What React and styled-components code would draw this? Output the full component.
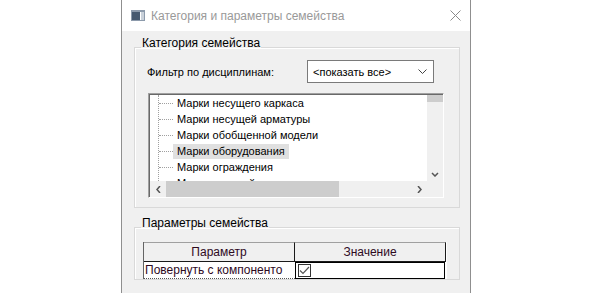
import React from "react";
import styled, { createGlobalStyle } from "styled-components";

const Global = createGlobalStyle`
  html, body {
    margin: 0;
    overflow: hidden;
    background: #fff;
  }
  body {
    font-family: "Liberation Sans", Arial, sans-serif;
  }
`;

const Dialog = styled.div`
  margin-left: 121px;
  width: 350px;
  height: 293px;
  box-sizing: border-box;
  border-left: 1px solid #8f8f8f;
  border-right: 1px solid #8f8f8f;
  background: #f0f0f0;
  display: flex;
  flex-direction: column;
  overflow: hidden;
`;

const TitleBar = styled.div`
  height: 31px;
  flex: none;
  background: #fff;
  display: flex;
  align-items: center;
  gap: 6px;
  padding: 0 9px 0 9px;
  font-size: 12px;
  color: #999;
`;

const Close = styled.svg`
  margin-left: auto;
`;

const Body = styled.div`
  padding: 6px 10px 0 12px;
`;

const Group = styled.fieldset`
  margin: 0;
  padding: ${(p) => p.$pad};
  min-width: 0;
  border: 1px solid #d9d9d9;
  box-shadow: inset 1px 1px 0 #fff;
  & + & {
    margin-top: 9px;
  }
`;

const Legend = styled.legend`
  margin-left: ${(p) => p.$offset}px;
  padding: 0 1px 8px;
  font-size: 12px;
  line-height: 12px;
  color: #000;
`;

const FilterRow = styled.div`
  margin-top: 3px;
  height: 23px;
  display: flex;
  align-items: center;
  font-size: 11px;
  color: #000;
`;

const FilterLabel = styled.span`
  width: 160px;
`;

const Select = styled.div`
  width: 127px;
  height: 23px;
  box-sizing: border-box;
  border: 1px solid #7a7a7a;
  background: #fff;
  display: flex;
  align-items: center;
  padding: 0 6px 0 5px;
  font-size: 11px;
  justify-content: space-between;
`;

const ListBox = styled.div`
  margin: 10px 0 0 1px;
  width: 296px;
  height: 105px;
  box-sizing: border-box;
  border: 1px solid;
  border-color: #a0a0a0 #fff #fff #a0a0a0;
  box-shadow: inset 1px 1px 0 #696969;
  background: #fff;
  padding: 1px 0 0 1px;
  display: grid;
  grid-template-columns: 1fr 16px;
  grid-template-rows: 1fr 16px;
`;

const Tree = styled.div`
  margin-left: 8px;
  border-left: 1px dotted #a0a0a0;
  overflow: hidden;
  font-size: 11px;
`;

const TreeRow = styled.div`
  height: 16px;
  display: flex;
  align-items: center;
`;

const Branch = styled.span`
  width: 14px;
  border-top: 1px dotted #a0a0a0;
`;

const TreeLabel = styled.span`
  padding: 1px 4px 2px 4px;
  background: ${(p) => (p.$selected ? "#e0e0e0" : "transparent")};
  white-space: nowrap;
`;

const VScroll = styled.div`
  background: #f0f0f0;
  display: flex;
  flex-direction: column;
  align-items: center;
  justify-content: space-between;
  padding-bottom: 4px;
`;

const VThumb = styled.div`
  align-self: stretch;
  height: 7px;
  background: #cdcdcd;
`;

const HScroll = styled.div`
  background: #f0f0f0;
  display: flex;
  align-items: center;
`;

const ArrowBox = styled.div`
  width: 16px;
  height: 16px;
  display: flex;
  align-items: center;
  justify-content: center;
`;

const HThumb = styled.div`
  width: 173px;
  height: 16px;
  background: #cdcdcd;
`;

const Track = styled.div`
  flex: 1;
`;

const Corner = styled.div`
  background: #f0f0f0;
`;

const Grid = styled.div`
  display: grid;
  grid-template-columns: 151px 151px;
  grid-auto-rows: 20px 17px 60px;
  width: 304px;
  box-sizing: border-box;
  border-left: 1px solid #646464;
  background: #fff;
  font-size: 12px;
  color: #2e0a1e;
`;

const HeadCell = styled.div`
  background: #f0f0f0;
  border-top: 1px solid #a0a0a0;
  border-bottom: 1px solid #1a1a1a;
  border-right: 1px solid #1a1a1a;
  display: flex;
  align-items: center;
  justify-content: center;
`;

const NameCell = styled.div`
  border-bottom: 1px dotted #555;
  padding-left: 1px;
  display: flex;
  align-items: center;
  white-space: nowrap;
  overflow: hidden;
`;

const ValueCell = styled.div`
  border: 1px solid #000;
  margin-right: 1px;
  display: flex;
  align-items: center;
  padding-left: 2px;
`;

const Check = styled.div`
  width: 13px;
  height: 13px;
  box-sizing: border-box;
  border: 1px solid #333;
  background: #fff;
  display: flex;
  align-items: center;
  justify-content: center;
`;

const items = [
  "Марки несущего каркаса",
  "Марки несущей арматуры",
  "Марки обобщенной модели",
  "Марки оборудования",
  "Марки ограждения",
  "Марки панелей",
];

const Chevron = ({ dir }) => {
  const pts = {
    down: "1,1 4,4 7,1",
    left: "4,0 1,3.5 4,7",
    right: "1,0 4,3.5 1,7",
  }[dir];
  const w = dir === "down" ? 8 : 5;
  const h = dir === "down" ? 5 : 7;
  return (
    <svg width={w} height={h} viewBox={`0 0 ${w} ${h}`}>
      <polyline points={pts} fill="none" stroke="#555" strokeWidth="1.5" />
    </svg>
  );
};

export default function App() {
  return (
    <>
      <Global />
      <Dialog>
        <TitleBar>
          <svg width="14" height="11" viewBox="0 0 14 11">
            <rect x="0" y="0" width="14" height="11" fill="#8c9aab" />
            <rect x="1" y="2" width="8" height="8" fill="#46596f" />
            <rect x="9" y="2" width="1" height="8" fill="#fff" />
            <rect x="10" y="2" width="3" height="8" fill="#c9d1da" />
          </svg>
          <span>Категория и параметры семейства</span>
          <Close width="11" height="11" viewBox="0 0 11 11">
            <path d="M0.5 0.5 L10.5 10.5 M10.5 0.5 L0.5 10.5" stroke="#8a8a8a" strokeWidth="1" />
          </Close>
        </TitleBar>

        <Body>
          <Group $pad="0 15px 9px 12px">
            <Legend $offset={-6}>Категория семейства</Legend>
            <FilterRow>
              <FilterLabel>Фильтр по дисциплинам:</FilterLabel>
              <Select>
                <span>&lt;показать все&gt;</span>
                <svg width="9" height="5" viewBox="0 0 9 5">
                  <polyline points="0.5,0.5 4.5,4.5 8.5,0.5" fill="none" stroke="#444" strokeWidth="1" />
                </svg>
              </Select>
            </FilterRow>

            <ListBox>
              <Tree>
                {items.map((t, i) => (
                  <TreeRow key={t}>
                    <Branch />
                    <TreeLabel $selected={i === 3}>{t}</TreeLabel>
                  </TreeRow>
                ))}
              </Tree>
              <VScroll>
                <VThumb />
                <Chevron dir="down" />
              </VScroll>
              <HScroll>
                <ArrowBox>
                  <Chevron dir="left" />
                </ArrowBox>
                <HThumb />
                <Track />
                <ArrowBox>
                  <Chevron dir="right" />
                </ArrowBox>
              </HScroll>
              <Corner />
            </ListBox>
          </Group>

          <Group $pad="5px 8px 0 8px">
            <Legend $offset={-2}>Параметры семейства</Legend>
            <Grid>
              <HeadCell>Параметр</HeadCell>
              <HeadCell>Значение</HeadCell>
              <NameCell>Повернуть с компоненто</NameCell>
              <ValueCell>
                <Check>
                  <svg width="11" height="9" viewBox="0 0 11 9">
                    <polyline points="1,4.5 4,7.5 10,1" fill="none" stroke="#555" strokeWidth="1.2" />
                  </svg>
                </Check>
              </ValueCell>
            </Grid>
          </Group>
        </Body>
      </Dialog>
    </>
  );
}
